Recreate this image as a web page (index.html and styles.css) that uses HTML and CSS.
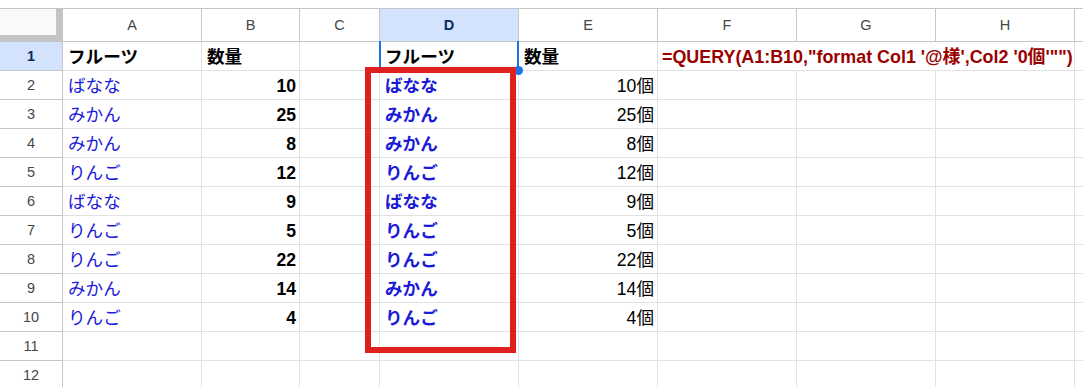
FILE: index.html
```html
<!DOCTYPE html>
<html lang="ja">
<head>
<meta charset="utf-8">
<title>QUERY format</title>
<link rel="stylesheet" href="styles.css">
</head>
<body>
<div class="page">
  <div class="sheet">
    <div class="corner"></div>
    <div class="ch">A</div><div class="ch">B</div><div class="ch">C</div><div class="ch ch-sel">D</div><div class="ch">E</div><div class="ch">F</div><div class="ch">G</div><div class="ch">H</div><div class="ch"></div>

    <div class="rh rh-sel">1</div>
    <div class="c b">フルーツ</div><div class="c b">数量</div><div class="c"></div><div class="c b">フルーツ</div><div class="c b">数量</div><div class="c formula">=QUERY(A1:B10,"format Col1 '@様',Col2 '0個'"")</div><div class="c"></div>

    <div class="rh">2</div>
    <div class="c blue">ばなな</div><div class="c num b">10</div><div class="c"></div><div class="c blue b">ばなな</div><div class="c num">10個</div><div class="c"></div><div class="c"></div><div class="c"></div><div class="c"></div>

    <div class="rh">3</div>
    <div class="c blue">みかん</div><div class="c num b">25</div><div class="c"></div><div class="c blue b">みかん</div><div class="c num">25個</div><div class="c"></div><div class="c"></div><div class="c"></div><div class="c"></div>

    <div class="rh">4</div>
    <div class="c blue">みかん</div><div class="c num b">8</div><div class="c"></div><div class="c blue b">みかん</div><div class="c num">8個</div><div class="c"></div><div class="c"></div><div class="c"></div><div class="c"></div>

    <div class="rh">5</div>
    <div class="c blue">りんご</div><div class="c num b">12</div><div class="c"></div><div class="c blue b">りんご</div><div class="c num">12個</div><div class="c"></div><div class="c"></div><div class="c"></div><div class="c"></div>

    <div class="rh">6</div>
    <div class="c blue">ばなな</div><div class="c num b">9</div><div class="c"></div><div class="c blue b">ばなな</div><div class="c num">9個</div><div class="c"></div><div class="c"></div><div class="c"></div><div class="c"></div>

    <div class="rh">7</div>
    <div class="c blue">りんご</div><div class="c num b">5</div><div class="c"></div><div class="c blue b">りんご</div><div class="c num">5個</div><div class="c"></div><div class="c"></div><div class="c"></div><div class="c"></div>

    <div class="rh">8</div>
    <div class="c blue">りんご</div><div class="c num b">22</div><div class="c"></div><div class="c blue b">りんご</div><div class="c num">22個</div><div class="c"></div><div class="c"></div><div class="c"></div><div class="c"></div>

    <div class="rh">9</div>
    <div class="c blue">みかん</div><div class="c num b">14</div><div class="c"></div><div class="c blue b">みかん</div><div class="c num">14個</div><div class="c"></div><div class="c"></div><div class="c"></div><div class="c"></div>

    <div class="rh">10</div>
    <div class="c blue">りんご</div><div class="c num b">4</div><div class="c"></div><div class="c blue b">りんご</div><div class="c num">4個</div><div class="c"></div><div class="c"></div><div class="c"></div><div class="c"></div>

    <div class="rh">11</div>
    <div class="c"></div><div class="c"></div><div class="c"></div><div class="c"></div><div class="c"></div><div class="c"></div><div class="c"></div><div class="c"></div><div class="c"></div>

    <div class="rh">12</div>
    <div class="c"></div><div class="c"></div><div class="c"></div><div class="c"></div><div class="c"></div><div class="c"></div><div class="c"></div><div class="c"></div><div class="c"></div>
  </div>

  <div class="selection"></div>
  <div class="handle"></div>
  <div class="highlight"></div>
</div>
</body>
</html>
```

FILE: styles.css
```css
html, body {
  margin: 0;
  padding: 0;
  background: #ffffff;
  overflow: hidden;
}

.page {
  position: relative;
  width: 1083px;
  height: 387px;
  overflow: hidden;
  font-family: "Liberation Sans", Arial, "Noto Sans CJK JP", sans-serif;
}

.sheet {
  margin-top: 8px;
  border-top: 1px solid #c4c7c5;
  display: grid;
  grid-template-columns: 63px 139px 98px 80px 139px 139px 139px 139px 139px 139px;
  grid-template-rows: 33px;
  grid-auto-rows: 29px;
  width: 1254px;
}

.sheet > div {
  box-sizing: border-box;
  border-right: 1px solid #e1e1e1;
  border-bottom: 1px solid #e1e1e1;
  min-width: 0;
}

.corner {
  background: #f8f9fa;
  border-right: 7px solid #c4c4c4 !important;
  border-bottom: 7px solid #c4c4c4 !important;
}

.ch {
  display: flex;
  align-items: center;
  justify-content: center;
  font-size: 14.5px;
  color: #444746;
  background: #ffffff;
  border-right-color: #c4c7c5 !important;
  border-bottom-color: #c4c7c5 !important;
}

.ch-sel {
  background: #d3e3fd;
  color: #0b2a5e;
  font-weight: bold;
}

.rh {
  display: flex;
  align-items: center;
  justify-content: center;
  font-size: 14.5px;
  color: #444746;
  background: #ffffff;
  border-right-color: #c4c7c5 !important;
  border-bottom-color: #c4c7c5 !important;
}

.rh-sel {
  background: #d3e3fd;
  color: #0b2a5e;
  font-weight: bold;
}

.c {
  display: flex;
  align-items: flex-end;
  padding: 0 3px 3px 5px;
  font-size: 17.6px;
  line-height: 20px;
  color: #000000;
  white-space: nowrap;
}

.num {
  justify-content: flex-end;
}

.b {
  font-weight: bold;
}

.blue {
  color: #1a1ad8;
}

.formula {
  grid-column: span 3;
  color: #990000;
  font-weight: bold;
  font-size: 17.9px;
  padding-left: 4px;
  overflow: visible;
}

.selection {
  position: absolute;
  left: 379px;
  top: 41px;
  width: 140px;
  height: 30px;
  box-sizing: border-box;
  border-left: 2px solid #1a73e8;
  border-right: 2px solid #1a73e8;
}

.handle {
  position: absolute;
  left: 514px;
  top: 66px;
  width: 9px;
  height: 9px;
  border-radius: 50%;
  background: #1a73e8;
}

.highlight {
  position: absolute;
  left: 365px;
  top: 67px;
  width: 151px;
  height: 286px;
  box-sizing: border-box;
  border: 6px solid #e0201f;
}
```
